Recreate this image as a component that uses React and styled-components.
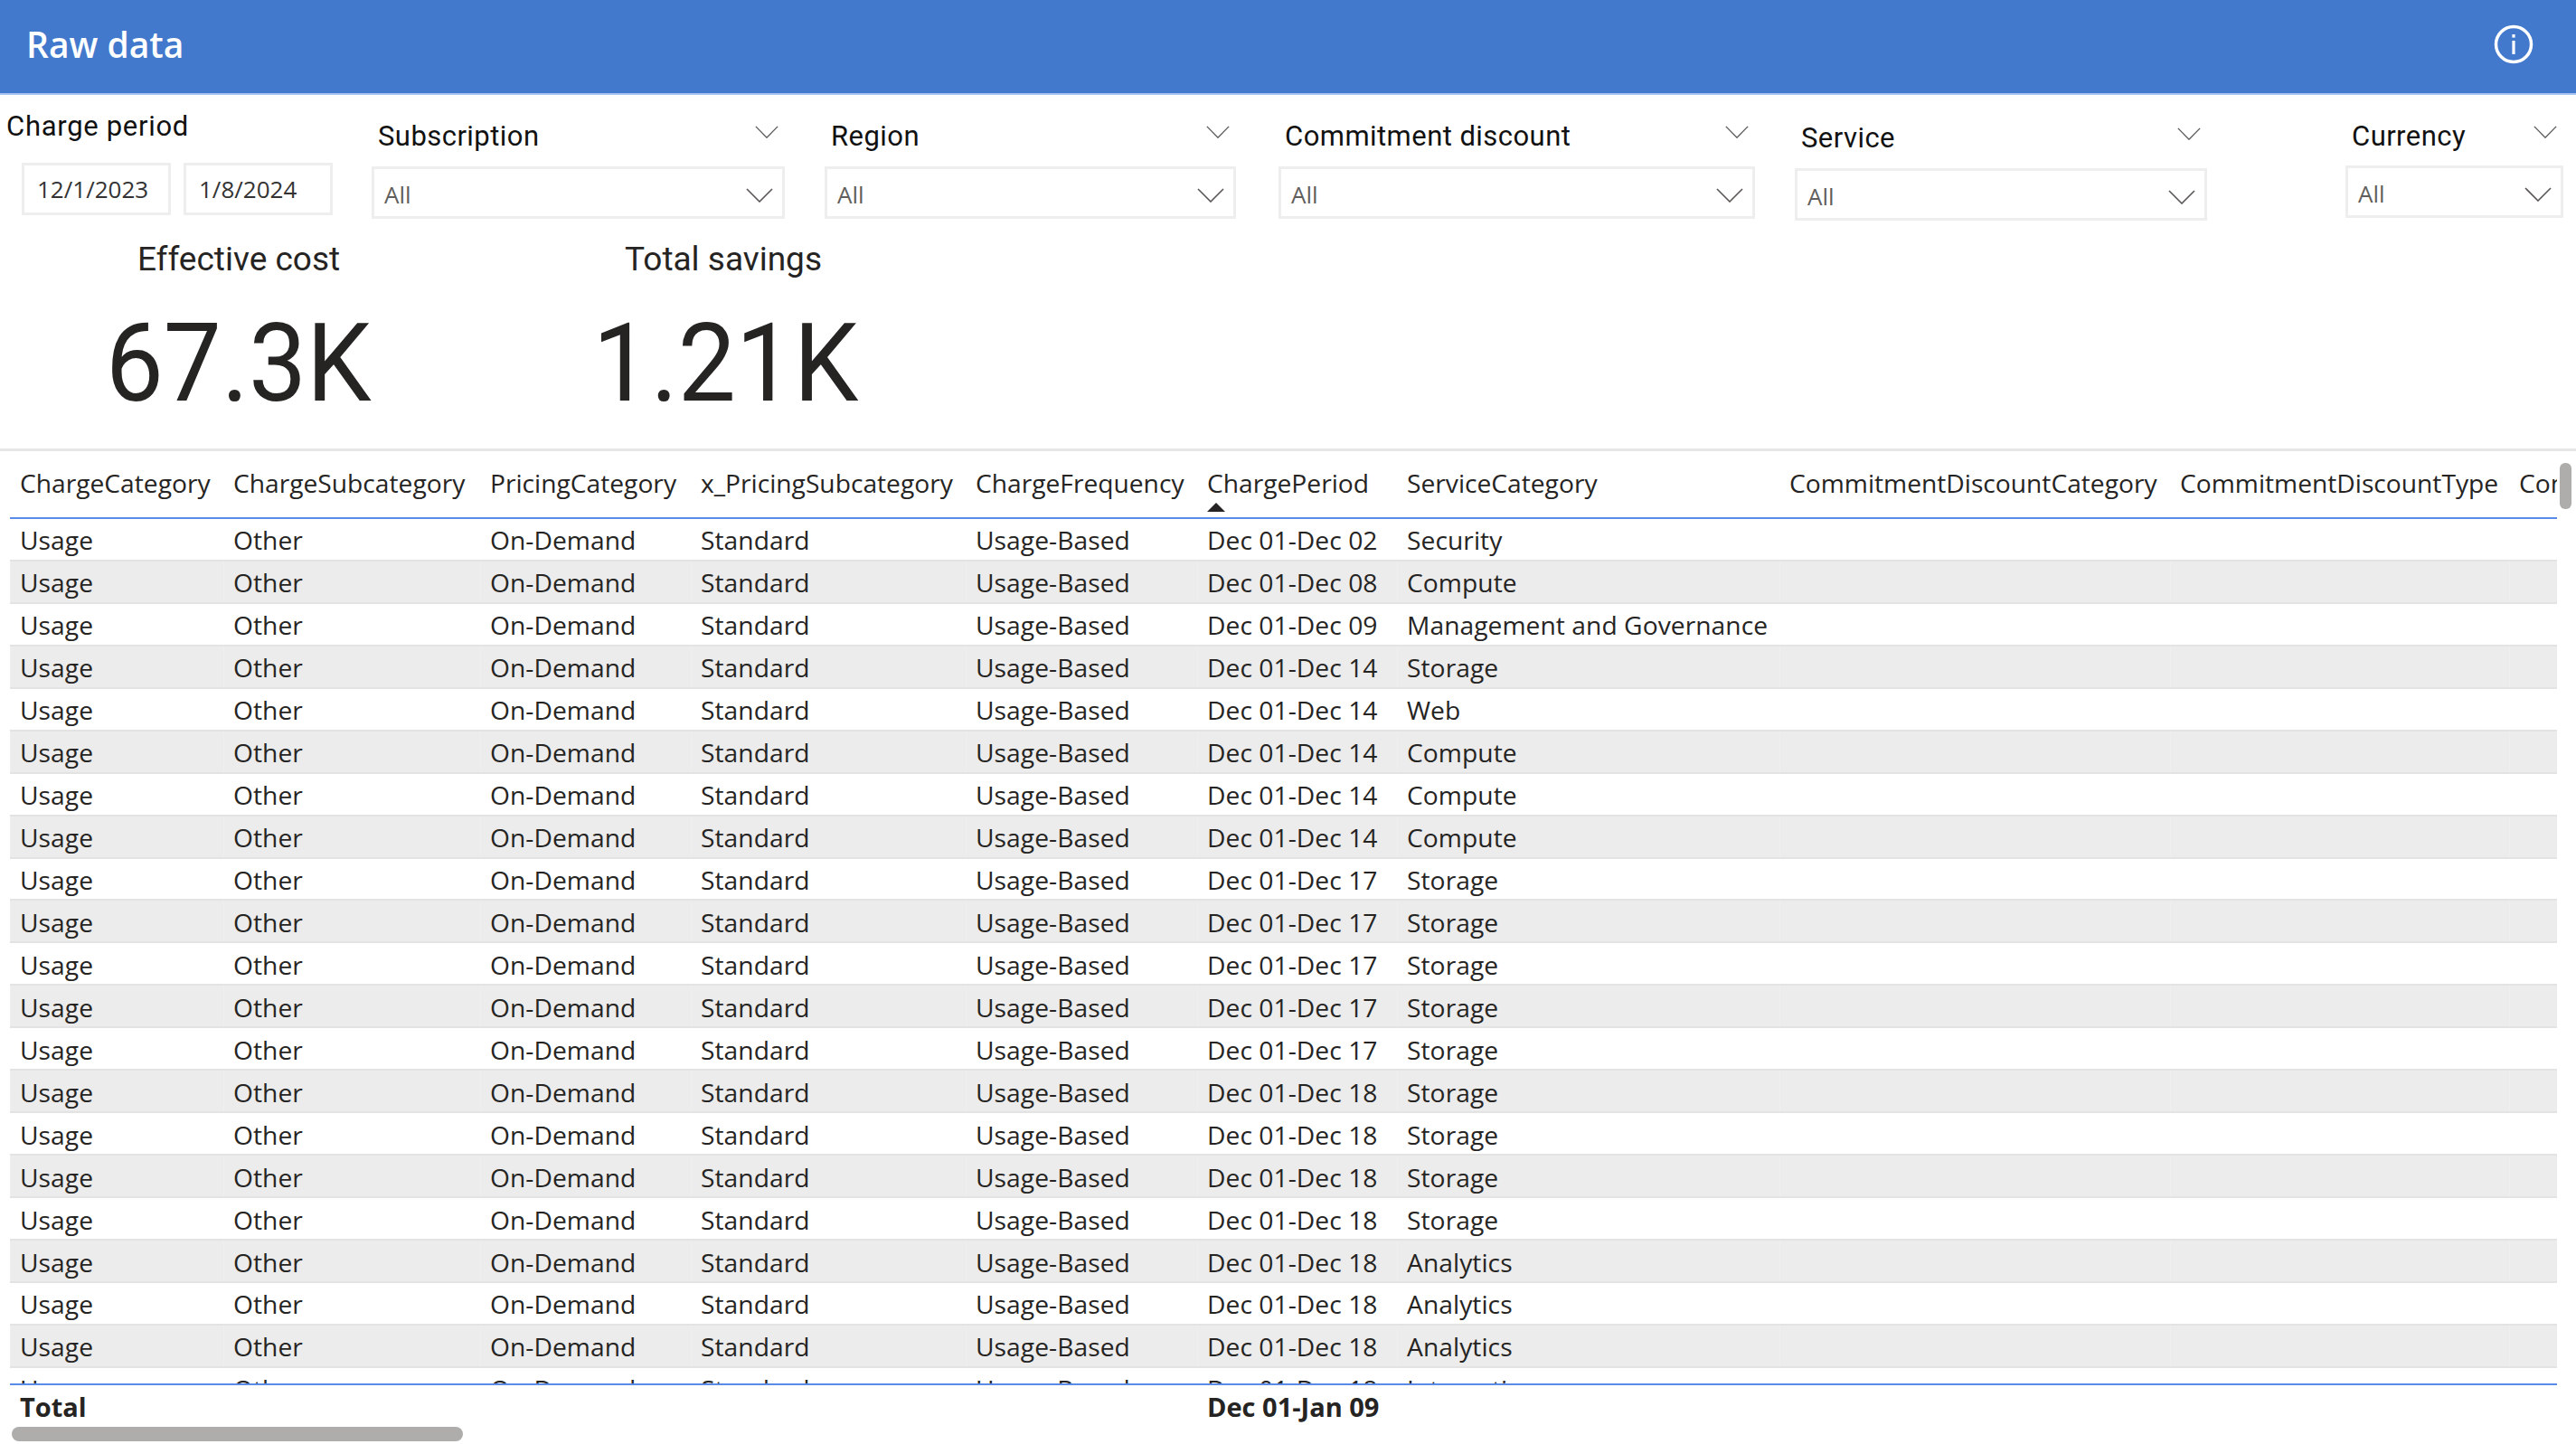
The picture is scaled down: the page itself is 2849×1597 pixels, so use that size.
import React from 'react'
import styled, { createGlobalStyle } from 'styled-components'

const Global = createGlobalStyle`
	html, body {
		margin: 0;
		padding: 0;
		background: #fff;
	}
	body {
		font-family: "Open Sans", "Noto Sans", sans-serif;
		color: #252423;
	}
`

const Page = styled.div`
	width: 2849px;
	height: 1597px;
	overflow: hidden;
`

const TitleBar = styled.header`
	box-sizing: border-box;
	height: 105px;
	background: #4279cc;
	border-bottom: 2px solid #a9c4ee;
	display: flex;
	align-items: center;
	justify-content: space-between;
	padding: 0 47px 6px 29px;
`

const Title = styled.h1`
	margin: 0;
	font-family: "Open Sans", sans-serif;
	font-size: 39px;
	font-weight: 600;
	color: #fff;
`

const Filters = styled.section`
	height: 158px;
	display: flex;
	align-items: flex-start;
`

const Slicer = styled.div`
	width: ${p => p.$width}px;
	margin-left: ${p => p.$left}px;
	padding-top: ${p => p.$top}px;
	flex: none;
`

const SlicerHead = styled.div`
	height: 36px;
	display: flex;
	justify-content: space-between;
	padding: 0 7px 0 7px;
	margin-bottom: ${p => p.$gap}px;
`

const SlicerLabel = styled.span`
	font-family: Roboto, sans-serif;
	font-size: 31px;
	letter-spacing: 0.45px;
	line-height: 36px;
	padding-top: 1px;
	color: #111;
`

const HeadChevron = styled.svg`
	width: 26px;
	height: 14px;
	margin-top: 7px;
	fill: none;
	stroke: #5a5856;
	stroke-width: 1.6;
`

const Dropdown = styled.div`
	height: 58px;
	box-sizing: border-box;
	border: 3px solid #eeeeee;
	display: flex;
	align-items: center;
	justify-content: space-between;
	padding: 4px 10px 0 11px;
	font-size: 26px;
	color: #605e5c;
`

const DropChevron = styled.svg`
	width: 30px;
	height: 16px;
	margin-top: 2px;
	fill: none;
	stroke: #5a5856;
	stroke-width: 1.6;
`

const DateHead = styled.div`
	font-family: Roboto, sans-serif;
	font-size: 31px;
	letter-spacing: 0.7px;
	line-height: 36px;
	color: #111;
	margin-bottom: 22px;
`

const DateRow = styled.div`
	display: flex;
	gap: 14px;
	padding-left: 17px;
`

const DateBox = styled.div`
	width: 165px;
	height: 58px;
	box-sizing: border-box;
	border: 3px solid #eeeeee;
	display: flex;
	align-items: center;
	padding-left: 14px;
	font-size: 26px;
	color: #333;
`

const Kpis = styled.section`
	height: 236px;
	box-sizing: border-box;
	display: flex;
	border-bottom: 3px solid #e6e6e6;
`

const Kpi = styled.div`
	width: 300px;
	margin-left: ${p => p.$left}px;
	text-align: center;
	flex: none;
`

const KpiLabel = styled.div`
	font-family: Roboto, sans-serif;
	font-size: 37px;
	line-height: 48px;
	color: #252423;
`

const KpiValue = styled.div`
	font-family: Roboto, sans-serif;
	font-size: 120px;
	line-height: 130px;
	margin-top: 26px;
	color: #252423;
	transform: scaleX(0.95) translateX(${p => p.$shift}px);
`

const TableWrap = styled.section`
	position: relative;
	padding-left: 11px;
`

const Clip = styled.div`
	width: 2817px;
	overflow: hidden;
`

const columns = '236px 284px 233px 304px 256px 221px 423px 432px 375px 300px'

const HeadRow = styled.div`
	display: grid;
	grid-template-columns: ${columns};
	align-items: center;
	height: 69px;
	padding-bottom: 4px;
	border-bottom: 2px solid #5b8be8;
`

const HeadCell = styled.div`
	position: relative;
	padding-left: 11px;
	font-size: 28.2px;
	white-space: nowrap;
	color: #252423;
`

const SortMark = styled.span`
	position: absolute;
	left: 11px;
	top: 41px;
	width: 0;
	height: 0;
	border-left: 10px solid transparent;
	border-right: 10px solid transparent;
	border-bottom: 10px solid #252423;
`

const Body = styled.div`
	height: 956px;
	overflow: hidden;
`

const Row = styled.div`
	display: grid;
	grid-template-columns: ${columns};
	align-items: center;
	box-sizing: border-box;
	height: ${p => (p.$shaded ? '49px' : '44.9px')};
	background: ${p => (p.$shaded ? '#ececec' : '#fff')};
	border-top: ${p => (p.$shaded ? '2px solid #e3e3e3' : '0')};
	border-bottom: ${p => (p.$shaded ? '2px solid #e3e3e3' : '0')};
`

const Cell = styled.div`
	box-sizing: border-box;
	height: 100%;
	display: flex;
	align-items: center;
	padding: 2px 0 0 10px;
	font-size: 28.2px;
	letter-spacing: 0.06px;
	white-space: nowrap;
	color: #252423;
	border-left: 1px solid ${p => (p.$shaded ? '#efefef' : 'transparent')};
`

const TotalRow = styled.div`
	display: grid;
	grid-template-columns: ${columns};
	align-items: center;
	height: 48px;
	box-sizing: border-box;
	border-top: 2px solid #5b8be8;
`

const TotalCell = styled.div`
	padding-left: 11px;
	font-size: 29px;
	font-weight: 700;
	white-space: nowrap;
	color: #252423;
`

const HScroll = styled.div`
	width: 499px;
	height: 16px;
	margin-left: 2px;
	border-radius: 8px;
	background: #aeadab;
`

const VScroll = styled.div`
	position: absolute;
	top: 13px;
	left: 2831px;
	width: 13px;
	height: 51px;
	border-radius: 6px;
	background: #aeadab;
`

const Chevron = ({ as: Comp }) => (
	<Comp viewBox="0 0 30 16" preserveAspectRatio="none">
		<polyline points="1,1 15,15 29,1" />
	</Comp>
)

const InfoIcon = () => (
	<svg width="44" height="44" viewBox="0 0 44 44" fill="none">
		<circle cx="22" cy="22" r="19.5" stroke="#fff" strokeWidth="3.5" />
		<rect x="20.4" y="18" width="3.2" height="15" fill="#fff" />
		<rect x="20.4" y="11" width="3.2" height="3.6" fill="#fff" />
	</svg>
)

const slicers = [
	{ label: 'Subscription', width: 457, left: 36, top: 27, gap: 16 },
	{ label: 'Region', width: 455, left: 44, top: 27, gap: 16 },
	{ label: 'Commitment discount', width: 527, left: 47, top: 27, gap: 16 },
	{ label: 'Service', width: 456, left: 44, top: 29, gap: 16 },
	{ label: 'Currency', width: 241, left: 153, top: 27, gap: 15 }
]

const headers = [
	'ChargeCategory',
	'ChargeSubcategory',
	'PricingCategory',
	'x_PricingSubcategory',
	'ChargeFrequency',
	'ChargePeriod',
	'ServiceCategory',
	'CommitmentDiscountCategory',
	'CommitmentDiscountType',
	'CommitmentDiscountName'
]

const rows = [
	['Dec 01-Dec 02', 'Security'],
	['Dec 01-Dec 08', 'Compute'],
	['Dec 01-Dec 09', 'Management and Governance'],
	['Dec 01-Dec 14', 'Storage'],
	['Dec 01-Dec 14', 'Web'],
	['Dec 01-Dec 14', 'Compute'],
	['Dec 01-Dec 14', 'Compute'],
	['Dec 01-Dec 14', 'Compute'],
	['Dec 01-Dec 17', 'Storage'],
	['Dec 01-Dec 17', 'Storage'],
	['Dec 01-Dec 17', 'Storage'],
	['Dec 01-Dec 17', 'Storage'],
	['Dec 01-Dec 17', 'Storage'],
	['Dec 01-Dec 18', 'Storage'],
	['Dec 01-Dec 18', 'Storage'],
	['Dec 01-Dec 18', 'Storage'],
	['Dec 01-Dec 18', 'Storage'],
	['Dec 01-Dec 18', 'Analytics'],
	['Dec 01-Dec 18', 'Analytics'],
	['Dec 01-Dec 18', 'Analytics'],
	['Dec 01-Dec 18', 'Integration']
]

const fixed = ['Usage', 'Other', 'On-Demand', 'Standard', 'Usage-Based']

const App = () => {
	return (
		<Page>
			<Global />
			<TitleBar>
				<Title>Raw data</Title>
				<InfoIcon />
			</TitleBar>
			<Filters>
				<Slicer $width={368} $left={7} $top={17}>
					<DateHead>Charge period</DateHead>
					<DateRow>
						<DateBox>12/1/2023</DateBox>
						<DateBox>1/8/2024</DateBox>
					</DateRow>
				</Slicer>
				{slicers.map(s => (
					<Slicer key={s.label} $width={s.width} $left={s.left} $top={s.top}>
						<SlicerHead $gap={s.gap}>
							<SlicerLabel>{s.label}</SlicerLabel>
							<Chevron as={HeadChevron} />
						</SlicerHead>
						<Dropdown>
							All
							<Chevron as={DropChevron} />
						</Dropdown>
					</Slicer>
				))}
			</Filters>
			<Kpis>
				<Kpi $left={114}>
					<KpiLabel>Effective cost</KpiLabel>
					<KpiValue $shift={-5}>67.3K</KpiValue>
				</Kpi>
				<Kpi $left={236}>
					<KpiLabel>Total savings</KpiLabel>
					<KpiValue $shift={-2}>1.21K</KpiValue>
				</Kpi>
			</Kpis>
			<TableWrap>
				<Clip>
					<HeadRow>
						{headers.map(h => (
							<HeadCell key={h}>
								{h}
								{h === 'ChargePeriod' && <SortMark />}
							</HeadCell>
						))}
					</HeadRow>
					<Body>
						{rows.map((r, i) => (
							<Row key={i} $shaded={i % 2 === 1}>
								{[...fixed, ...r, '', '', ''].map((c, j) => (
									<Cell key={j} $shaded={i % 2 === 1}>
										{c}
									</Cell>
								))}
							</Row>
						))}
					</Body>
					<TotalRow>
						<TotalCell>Total</TotalCell>
						<TotalCell />
						<TotalCell />
						<TotalCell />
						<TotalCell />
						<TotalCell>Dec 01-Jan 09</TotalCell>
					</TotalRow>
				</Clip>
				<HScroll />
				<VScroll />
			</TableWrap>
		</Page>
	)
}

export default React.memo(App)
